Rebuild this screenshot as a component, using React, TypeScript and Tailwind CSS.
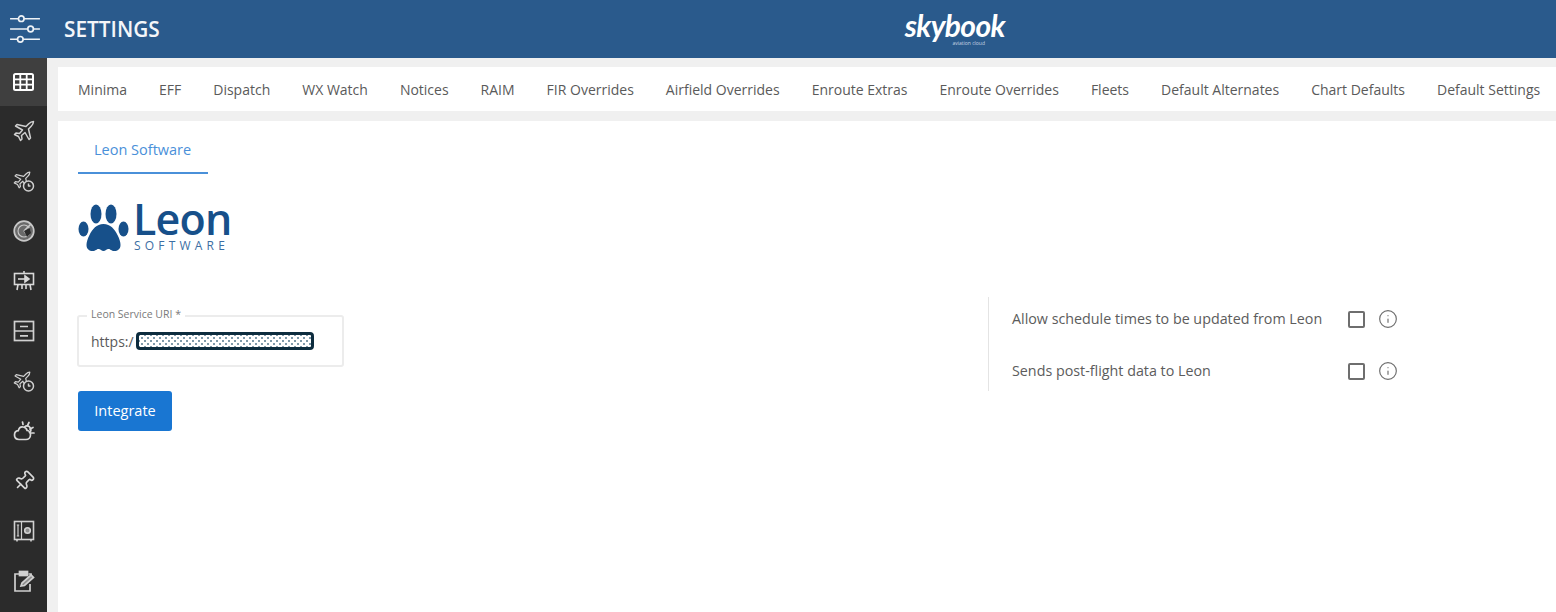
import React from 'react';
import { Info, Pin } from 'lucide-react';

const tabs = [
  'Minima',
  'EFF',
  'Dispatch',
  'WX Watch',
  'Notices',
  'RAIM',
  'FIR Overrides',
  'Airfield Overrides',
  'Enroute Extras',
  'Enroute Overrides',
  'Fleets',
  'Default Alternates',
  'Chart Defaults',
  'Default Settings',
];

const planePath =
  'M20.500 1.500C19 1.500 17 2.500 15.500 4L13 6.500 4 4.500 2.500 6 9.500 10 6.500 13.500 3 13 1.500 14.500 5.500 16.500 7.500 20.500 9 19 8.500 15.500 12 12.500 16 19.500 17.500 18 15.500 9 18 6.500C19.500 5 20.500 3 20.500 1.500Z';

const SlidersIcon = () => (
  <svg width="30" height="28" viewBox="0 0 32 30" fill="none" stroke="#eef2f6" strokeWidth="1.800">
    <path d="M0 4h9M15 4h17M0 15h19M25 15h7M0 26h8M14 26h18" />
    <circle cx="12" cy="4" r="3" />
    <circle cx="22" cy="15" r="3" />
    <circle cx="11" cy="26" r="3" />
  </svg>
);

const GridIcon = () => (
  <svg width="21" height="18" viewBox="0 0 21 18" fill="none">
    <rect x="1" y="1" width="19" height="16" rx="1.500" fill="#3f3f3f" stroke="white" strokeWidth="2" />
    <path d="M1 6.300h19M1 11.700h19M7.300 1v16M13.700 1v16" stroke="white" strokeWidth="1.800" />
  </svg>
);

const PlaneIcon = () => (
  <svg width="22" height="22" viewBox="0 0 22 22" fill="none" stroke="#d0d0d0" strokeWidth="1.500" strokeLinejoin="round">
    <path d={planePath} />
  </svg>
);

const PlaneBadgeIcon = () => (
  <svg width="22" height="22" viewBox="0 0 22 22" fill="none" stroke="#d0d0d0" strokeWidth="1.500" strokeLinejoin="round">
    <g transform="translate(0 1) scale(0.82)">
      <path d={planePath} />
    </g>
    <circle cx="15.500" cy="16" r="5" fill="#2b2b2b" />
    <path d="M15.500 13.500V16h2" />
  </svg>
);

const RadarIcon = () => (
  <svg width="22" height="22" viewBox="0 0 22 22" fill="none" stroke="#c8c8c8" strokeWidth="1.700">
    <circle cx="11" cy="11" r="9.800" fill="#6a6a6a" />
    <circle cx="11" cy="11" r="6" strokeWidth="1.100" />
    <path d="M11 11 18 4M11 11l4 5" />
    <path d="M11 11l6-3 1 5-4 4z" fill="#2b2b2b" stroke="none" />
  </svg>
);

const BoardIcon = () => (
  <svg width="22" height="22" viewBox="0 0 22 22" fill="none" stroke="#d8d8d8" strokeWidth="1.600">
    <path d="M11 1v2.500" />
    <rect x="1.500" y="3.500" width="19" height="11" />
    <path d="M5 9h8" />
    <path d="M12 6l4 3-4 3z" fill="#d8d8d8" />
    <path d="M5 14.500 4 20M9 14.500V19M13 14.500V19M17 14.500l1 5.500" />
  </svg>
);

const DrawerIcon = () => (
  <svg width="22" height="22" viewBox="0 0 22 22" fill="none" stroke="#d0d0d0" strokeWidth="1.700">
    <rect x="1.500" y="1.500" width="19" height="19" />
    <path d="M1.500 11h19M7 6.500h8M7 15.800h8" />
  </svg>
);

const CloudSunIcon = () => (
  <svg width="22" height="22" viewBox="0 0 22 22" fill="none" stroke="#d8d8d8" strokeWidth="1.700" strokeLinecap="round">
    <path d="M6 19.500C3 19.500 1.500 17.300 1.500 15c0-2.500 1.800-4.200 3.800-4.400C6 8 8 6.500 10.300 7c2.200.4 3.500 2 3.800 3.500 2 .2 3.400 2 3.400 4.200 0 2.700-2 4.800-4.500 4.800z" />
    <path d="M10 4.500 9.500 2M14.500 5.500 16 2.500M17 9l3-1.500M18.500 13H21" />
    <path d="M11.500 7c1.500-1.500 4-1.500 5.500.5s1 4-.5 5" />
  </svg>
);

const SafeIcon = () => (
  <svg width="22" height="22" viewBox="0 0 22 22" fill="none" stroke="#d0d0d0" strokeWidth="1.600">
    <rect x="1.500" y="1.500" width="19" height="18" />
    <path d="M4 20v1.500M18 20v1.500" />
    <path d="M8.500 1.500v18" strokeWidth="1.200" />
    <path d="M5 5v11M3.800 5h2.400M3.800 16h2.400" strokeWidth="1.200" />
    <circle cx="14.500" cy="10.500" r="2.800" fill="#8e8e8e" />
  </svg>
);

const ClipboardIcon = () => (
  <svg width="22" height="22" viewBox="0 0 22 22" fill="none" stroke="#d0d0d0" strokeWidth="1.700">
    <path d="M15.500 4H18v3M6.500 4H2v17h15v-7" />
    <rect x="6.500" y="1.500" width="8" height="4" fill="#d0d0d0" />
    <path d="M8 16l1-3 9-8 2.500 2.500-9 8z" fill="#8e8e8e" />
  </svg>
);

const sideIcons = [
  <GridIcon />,
  <PlaneIcon />,
  <PlaneBadgeIcon />,
  <RadarIcon />,
  <BoardIcon />,
  <DrawerIcon />,
  <PlaneBadgeIcon />,
  <CloudSunIcon />,
  <Pin size={22} strokeWidth={1.800} className="text-[#d8d8d8] rotate-45" />,
  <SafeIcon />,
  <ClipboardIcon />,
];

const PawIcon = () => (
  <svg width="51" height="48" viewBox="0 0 51 48" fill="#17508a">
    <ellipse cx="5.500" cy="25" rx="5" ry="7.500" />
    <ellipse cx="18" cy="10" rx="5.500" ry="9.500" />
    <ellipse cx="33" cy="10" rx="5.500" ry="9.500" />
    <ellipse cx="45.500" cy="25" rx="5" ry="7.500" />
    <path d="M25.500 20c7 0 11 5 14 11 2 4 3 7 3 10 0 4-3 6-6 6-3.500 0-4-2-6-2-2 0-3 2-5 2s-3-2-5-2-2.500 2-6 2c-3 0-6-2-6-6 0-3 1-6 3-10 3-6 7-11 14-11z" />
  </svg>
);

const OptionRow = ({ label }: { label: string }) => (
  <div className="flex items-center h-[52px] shrink-0">
    <span className="w-[336px] text-[14.300px] text-[#5c5c5c]">{label}</span>
    <span className="w-[17px] h-[17px] rounded-[2px] border-2 border-[#6e6e6e]" />
    <Info size={20} strokeWidth={1.400} className="ml-[13px] text-[#6e6e6e]" />
  </div>
);

export default function App() {
  return (
    <div className="w-[1556px] h-[612px] flex flex-col overflow-hidden bg-[#f0f0f0] font-['Open_Sans',sans-serif]">
      <header className="h-[58px] shrink-0 flex items-center bg-[#2a5a8c] relative">
        <div className="w-[50px] flex justify-center">
          <SlidersIcon />
        </div>
        <h1 className="ml-[14px] mt-[2px] text-[20.800px] font-semibold text-[#f4f6f9]">SETTINGS</h1>
        <div className="absolute left-[905px] top-[6px] flex flex-col items-end text-white w-[100px]">
          <span className="text-[30px] leading-[38px] font-bold italic tracking-[-0.600px] font-['Lato',sans-serif]">skybook</span>
          <span className="text-[5px] leading-[5px] -mt-[3px] mr-[20px] text-[#c9d6e4]">aviation cloud</span>
        </div>
      </header>

      <div className="flex flex-1 min-h-0">
        <nav className="w-[47px] shrink-0 bg-[#2b2b2b]">
          {sideIcons.map((icon, i) => (
            <div
              key={i}
              className={i === 0 ? 'h-[48px] flex items-center justify-center bg-[#3f3f3f]' : 'h-[50px] flex items-center justify-center'}
            >
              {icon}
            </div>
          ))}
        </nav>

        <main className="flex-1 min-w-0 pl-[11px] pt-[9px] flex flex-col gap-[10px]">
          <div className="h-[44px] shrink-0 bg-white flex items-center gap-[32px] pl-[20px] text-[14px] text-[#5a5a5a] whitespace-nowrap">
            {tabs.map((tab) => (
              <span key={tab}>{tab}</span>
            ))}
          </div>

          <section className="flex-1 bg-white pl-[20px]">
            <div className="w-[130px] h-[53px] flex items-center pl-[16px] pt-[6px] border-b-2 border-[#4a90d9] text-[14.500px] text-[#4a90d9]">
              Leon Software
            </div>

            <div className="mt-[24px] flex items-center gap-[4px] h-[60px]">
              <PawIcon />
              <div className="flex flex-col text-[#17508a]">
                <span className="text-[43px] leading-[38px] font-semibold tracking-[-0.800px] -mt-[2px]">Leon</span>
                <span className="text-[12px] leading-[16px] tracking-[4.200px] text-[#3c6ea3] ml-[1px]">SOFTWARE</span>
              </div>
            </div>

            <div className="flex mt-[39px]">
              <div className="w-[910px] shrink-0 pt-[18px]">
                <div className="relative -ml-[1px] w-[267px] h-[52px] rounded-[3px] border-2 border-[#ececec] flex items-center pl-[12px]">
                  <span className="absolute left-[8px] -top-[10px] bg-white px-[4px] text-[10.500px] leading-[14px] text-[#7a7a7a]">Leon Service URI *</span>
                  <span className="text-[14px] text-[#5a5a5a]">https:/</span>
                  <span className="ml-[2px] w-[178px] h-[18px] rounded-[4px] border-[3px] border-[#0d2c3e] bg-white bg-[radial-gradient(#7f9aaa_1px,transparent_1px),radial-gradient(#7f9aaa_1px,transparent_1px)] bg-[length:6px_6px] bg-[position:0_0,3px_3px]" />
                </div>
                <button className="mt-[24px] w-[94px] h-[40px] rounded-[3px] bg-[#1976d2] text-[14.500px] text-white">Integrate</button>
              </div>

              <div className="border-l border-[#e4e4e4] pl-[23px] pt-[2px] h-[94px] flex flex-col justify-center">
                <OptionRow label="Allow schedule times to be updated from Leon" />
                <OptionRow label="Sends post-flight data to Leon" />
              </div>
            </div>
          </section>
        </main>
      </div>
    </div>
  );
}
